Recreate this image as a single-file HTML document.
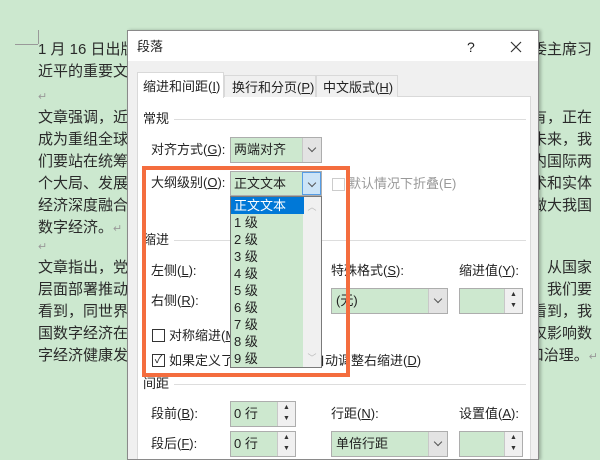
<!DOCTYPE html>
<html><head><meta charset="utf-8"><style>
*{margin:0;padding:0;box-sizing:border-box}
body{width:600px;height:450px;overflow:hidden;background:#cce8cf;position:relative;font-family:"Liberation Sans","Noto Sans CJK SC",sans-serif;color:#222}
.d{position:absolute;font-size:15px;line-height:22px;white-space:nowrap;color:#2a2a2a}
.r{position:absolute;right:8px;font-size:15px;line-height:22px;white-space:nowrap;color:#2a2a2a}
.p{color:#999;font-size:11px}
#dlg{position:absolute;left:127px;top:30px;width:412px;height:430px;background:#f0f0f0;border:1px solid #8a8a8a;box-shadow:2px 0 3px rgba(0,0,0,.25);overflow:hidden}
.a{position:absolute;font-size:13px;white-space:nowrap;color:#222;line-height:16px}
.hl{position:absolute;height:1px;background:#ddd}
.cb{position:absolute;background:#cde8cf;border:1px solid #adadad}
.ar{position:absolute;right:0;top:0;bottom:0;width:19px;background:#e3e3e3;border-left:1px solid #c8c8c8}
.ar:after{content:"";position:absolute;left:6px;top:7px;width:5px;height:5px;border-right:1px solid #555;border-bottom:1px solid #555;transform:rotate(45deg)}
.sp{position:absolute;right:0;top:0;bottom:0;width:18px;background:#f0f0f0;border-left:1px solid #c8c8c8;font-size:7px;text-align:center;line-height:11px;color:#333}
.chk{position:absolute;width:13px;height:13px;border:1px solid #333;background:#fff}
</style></head><body>
<div style="position:absolute;left:15px;top:44px;width:23px;border-top:1px solid #999"></div>
<div style="position:absolute;left:38px;top:30px;height:14px;border-left:1px solid #999"></div>
<div class="d" style="left:38px;top:39px">1 月 16 日出版了习近平</div>
<div class="d" style="left:38px;top:61px">近平的重要文章</div>
<div class="d p" style="left:38px;top:86px">↵</div>
<div class="d" style="left:38px;top:107px">文章强调，近年来</div>
<div class="d" style="left:38px;top:129px">成为重组全球要素</div>
<div class="d" style="left:38px;top:151px">们要站在统筹中华</div>
<div class="d" style="left:38px;top:173px">个大局、发展安全</div>
<div class="d" style="left:38px;top:195px">经济深度融合，</div>
<div class="d" style="left:38px;top:217px">数字经济。<span class="p">↵</span></div>
<div class="d p" style="left:38px;top:236px">↵</div>
<div class="d" style="left:38px;top:257px">文章指出，党的十</div>
<div class="d" style="left:38px;top:279px">层面部署推动数字</div>
<div class="d" style="left:38px;top:301px">看到，同世界数字</div>
<div class="d" style="left:38px;top:323px">国数字经济在快速</div>
<div class="d" style="left:38px;top:345px">字经济健康发展，</div>
<div class="r" style="top:39px">委主席习</div>
<div class="r" style="top:107px">有，正在</div>
<div class="r" style="top:129px">未来，我</div>
<div class="r" style="top:151px">内国际两</div>
<div class="r" style="top:173px">术和实体</div>
<div class="r" style="top:195px">做大我国</div>
<div class="r" style="top:257px">，从国家</div>
<div class="r" style="top:279px">，我们要</div>
<div class="r" style="top:301px">看到，我</div>
<div class="r" style="top:323px">仅影响数</div>
<div class="r" style="top:345px;right:2px">和治理。<span class="p">↵</span></div>

<div id="dlg">
 <div style="position:absolute;left:0;top:0;width:100%;height:30px;background:#fff"></div>
 <div class="a" style="left:9px;top:8px">段落</div>
 <div class="a" style="left:339px;top:8px;font-size:14px">?</div>
 <svg style="position:absolute;left:382px;top:10px" width="12" height="12" viewBox="0 0 12 12"><path d="M1 1L11 11M11 1L1 11" stroke="#333" stroke-width="1.2"/></svg>
 <div style="position:absolute;left:9px;top:65px;width:394px;height:380px;background:#fff;border:1px solid #d9d9d9"></div>
 <div style="position:absolute;left:9px;top:41px;width:87px;height:26px;background:#fff;border:1px solid #d9d9d9;border-bottom:none"></div>
 <div style="position:absolute;left:96px;top:44px;width:92px;height:22px;background:#f0f0f0;border:1px solid #d9d9d9;border-bottom:none"></div>
 <div style="position:absolute;left:188px;top:44px;width:82px;height:22px;background:#f0f0f0;border:1px solid #d9d9d9;border-bottom:none"></div>
 <div class="a" style="left:15px;top:48px">缩进和间距(<u>I</u>)</div>
 <div class="a" style="left:104px;top:49px">换行和分页(<u>P</u>)</div>
 <div class="a" style="left:195px;top:49px">中文版式(<u>H</u>)</div>

 <div class="a" style="left:15px;top:80px">常规</div><div class="hl" style="left:46px;top:88px;width:352px"></div>
 <div class="a" style="left:23px;top:111px">对齐方式(<u>G</u>):</div>
 <div class="cb" style="left:102px;top:106px;width:92px;height:26px"><div class="a" style="left:3px;top:4px">两端对齐</div><div class="ar"></div></div>
 <div class="a" style="left:23px;top:144px">大纲级别(<u>O</u>):</div>
 <div class="cb" style="left:102px;top:140px;width:92px;height:25px"><div class="a" style="left:3px;top:4px">正文文本</div><div class="ar" style="background:#cce4f7;border:1px solid #569de5"></div></div>
 <div class="chk" style="left:204px;top:147px;border-color:#ccc"></div>
 <div class="a" style="left:220px;top:145px;color:#999">默认情况下折叠(E)</div>

 <div class="a" style="left:15px;top:201px">缩进</div><div class="hl" style="left:46px;top:209px;width:352px"></div>
 <div class="a" style="left:23px;top:232px">左侧(<u>L</u>):</div>
 <div class="a" style="left:23px;top:262px">右侧(<u>R</u>):</div>
 <div class="a" style="left:203px;top:232px">特殊格式(<u>S</u>):</div>
 <div class="a" style="left:331px;top:232px">缩进值(<u>Y</u>):</div>
 <div class="cb" style="left:203px;top:257px;width:117px;height:26px"><div class="a" style="left:4px;top:4px">(无)</div><div class="ar"></div></div>
 <div class="cb" style="left:331px;top:257px;width:64px;height:26px"><div class="sp">▲<br>▼</div></div>
 <div class="chk" style="left:24px;top:298px"></div>
 <div class="a" style="left:41px;top:297px">对称缩进(<u>M</u>)</div>
 <div class="chk" style="left:24px;top:323px;font-size:11px;line-height:11px;text-align:center">✓</div>
 <div class="a" style="left:41px;top:322px">如果定义了文档网格，则自动调整右缩进(<u>D</u>)</div>

 <div class="a" style="left:15px;top:345px">间距</div><div class="hl" style="left:46px;top:353px;width:352px"></div>
 <div class="a" style="left:23px;top:375px">段前(<u>B</u>):</div>
 <div class="cb" style="left:102px;top:370px;width:66px;height:26px"><div class="a" style="left:3px;top:4px">0 行</div><div class="sp">▲<br>▼</div></div>
 <div class="a" style="left:203px;top:375px">行距(<u>N</u>):</div>
 <div class="a" style="left:331px;top:375px">设置值(<u>A</u>):</div>
 <div class="a" style="left:23px;top:405px">段后(<u>F</u>):</div>
 <div class="cb" style="left:102px;top:400px;width:66px;height:26px"><div class="a" style="left:3px;top:4px">0 行</div><div class="sp">▲<br>▼</div></div>
 <div class="cb" style="left:203px;top:400px;width:117px;height:26px"><div class="a" style="left:4px;top:4px">单倍行距</div><div class="ar"></div></div>
 <div class="cb" style="left:331px;top:400px;width:64px;height:26px"><div class="sp">▲<br>▼</div></div>

 <div style="position:absolute;left:102px;top:165px;width:92px;height:172px;background:#cde8cf;border:1px solid #7a7a7a">
  <div style="position:absolute;right:0;top:0;bottom:0;width:18px;background:#f0f0f0;color:#bbb;font-size:9px;text-align:center">
   <div style="margin-top:3px">︿</div><div style="position:absolute;bottom:3px;width:100%">﹀</div></div>
  <div style="position:absolute;left:0;top:0;width:73px;height:17px;background:#0078d7"></div>
  <div class="a" style="left:3px;top:1px;color:#fff">正文文本</div>
  <div class="a" style="left:3px;top:18px">1 级</div>
  <div class="a" style="left:3px;top:35px">2 级</div>
  <div class="a" style="left:3px;top:52px">3 级</div>
  <div class="a" style="left:3px;top:69px">4 级</div>
  <div class="a" style="left:3px;top:86px">5 级</div>
  <div class="a" style="left:3px;top:103px">6 级</div>
  <div class="a" style="left:3px;top:120px">7 级</div>
  <div class="a" style="left:3px;top:137px">8 级</div>
  <div class="a" style="left:3px;top:154px">9 级</div>
 </div>
</div>
<div style="position:absolute;left:142px;top:166px;width:208px;height:211px;border:4px solid #f46d3e"></div>
</body></html>
